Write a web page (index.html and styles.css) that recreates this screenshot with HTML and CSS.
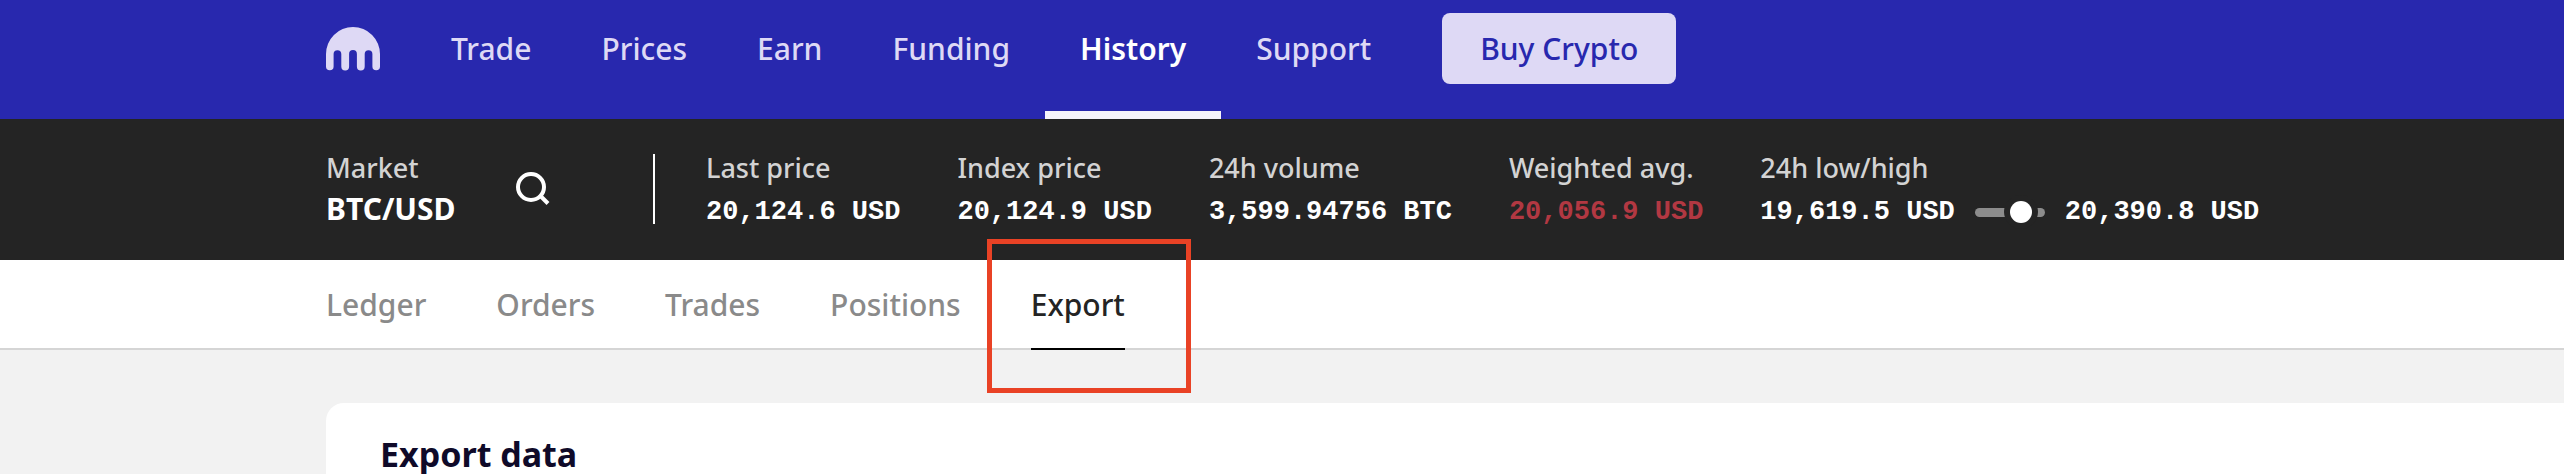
FILE: index.html
```html
<!DOCTYPE html>
<html lang="en">
<head>
    <meta charset="UTF-8">
    <meta name="viewport" content="width=device-width, initial-scale=1.0">
    <title>History - Export</title>
    <link rel="stylesheet" href="styles.css">
</head>
<body>
    <header class="header">
        <a href="#" class="logo" aria-label="Home">
            <svg width="54" height="44" viewBox="0 0 54 44" fill="currentColor">
                <path d="M0 27a27 27 0 0 1 54 0v12.500a3.800 3.800 0 0 1-7.600 0V27a3.800 3.800 0 0 0-7.700 0v12.500a3.900 3.900 0 0 1-7.800 0V27a3.900 3.900 0 0 0-7.800 0v12.500a3.900 3.900 0 0 1-7.800 0V27a3.800 3.800 0 0 0-7.700 0v12.500a3.800 3.800 0 0 1-7.600 0z"/>
            </svg>
        </a>
        <nav class="nav">
            <a href="#">Trade</a>
            <a href="#">Prices</a>
            <a href="#">Earn</a>
            <a href="#">Funding</a>
            <a href="#" class="active">History</a>
            <a href="#">Support</a>
        </nav>
        <button type="button" class="buy-btn">Buy Crypto</button>
    </header>

    <section class="ticker">
        <div class="market">
            <div>
                <div class="label">Market</div>
                <div class="pair">BTC/USD</div>
            </div>
            <button type="button" class="search-btn" aria-label="Search markets">
                <svg width="34" height="34" viewBox="0 0 34 34" fill="none" stroke="currentColor" stroke-width="4">
                    <circle cx="15" cy="15" r="13"/>
                    <path d="M24 23.500l8 8"/>
                </svg>
            </button>
        </div>
        <div class="stats">
            <div>
                <div class="label">Last price</div>
                <div class="value">20,124.6 USD</div>
            </div>
            <div>
                <div class="label">Index price</div>
                <div class="value">20,124.9 USD</div>
            </div>
            <div>
                <div class="label">24h volume</div>
                <div class="value">3,599.94756 BTC</div>
            </div>
            <div>
                <div class="label">Weighted avg.</div>
                <div class="value down">20,056.9 USD</div>
            </div>
            <div>
                <div class="label">24h low/high</div>
                <div class="value range">
                    <span>19,619.5 USD</span>
                    <input type="range" min="0" max="100" value="73" aria-label="Price within 24h range">
                    <span>20,390.8 USD</span>
                </div>
            </div>
        </div>
    </section>

    <nav class="tabs">
        <a href="#">Ledger</a>
        <a href="#">Orders</a>
        <a href="#">Trades</a>
        <a href="#">Positions</a>
        <a href="#" class="active">Export</a>
    </nav>

    <main class="content">
        <div class="card">
            <h1>Export data</h1>
        </div>
    </main>
</body>
</html>
```
FILE: styles.css
```css
:root {
    --gutter: 326px;
    --blue: #2828ae;
    --lavender: #ded9f5;
    --dark: #242424;
}

* {
    box-sizing: border-box;
}

body {
    margin: 0;
    background: #f2f2f2;
    font-family: "Noto Sans", sans-serif;
    font-size: 30px;
    font-weight: 500;
    line-height: 40px;
    white-space: nowrap;
    overflow-x: hidden;
}

a {
    color: inherit;
    text-decoration: none;
}

button {
    border: none;
    font: inherit;
    cursor: pointer;
}

/* Header */
.header {
    display: flex;
    align-items: flex-start;
    padding-left: var(--gutter);
    background: var(--blue);
    color: var(--lavender);
}

.logo {
    display: flex;
    margin-right: 36px;
    padding-top: 27px;
}

.nav {
    display: flex;
}

.nav a {
    padding: 29px 35px 42px;
    border-bottom: 8px solid transparent;
}

.nav a.active {
    border-bottom-color: #f6f5fc;
    color: #fff;
    font-weight: 600;
}

.buy-btn {
    height: 71px;
    margin: 13px 0 0 36px;
    padding: 0 38px;
    border-radius: 8px;
    background: var(--lavender);
    color: var(--blue);
}

/* Market ticker */
.ticker {
    display: flex;
    align-items: flex-start;
    padding: 29px 0 24px var(--gutter);
    background: var(--dark);
    color: #fff;
}

.market {
    display: flex;
    align-items: center;
    justify-content: space-between;
    width: 224px;
}

.search-btn {
    display: flex;
    padding: 0;
    background: none;
    color: #fff;
}

.stats {
    display: flex;
    gap: 57px;
    margin-left: 103px;
    padding-left: 53px;
    background: linear-gradient(#fff, #fff) left 6px / 2px 70px no-repeat;
}

.label {
    color: #d3d3d3;
    font-size: 27px;
}

.pair {
    font-weight: 700;
    line-height: 42px;
}

.value {
    font-family: "Liberation Mono", monospace;
    font-size: 27px;
    font-weight: 700;
    line-height: 48px;
}

.down {
    color: #b23842;
}

.range {
    display: flex;
    align-items: center;
    gap: 20px;
}

.range input {
    appearance: none;
    width: 70px;
    height: 9px;
    margin: 0;
    border-radius: 5px;
    background: #8c8c8c;
}

.range input::-webkit-slider-thumb {
    appearance: none;
    width: 22px;
    height: 22px;
    border-radius: 50%;
    background: #fff;
    box-shadow: 0 0 0 6px var(--dark);
}

/* History tabs */
.tabs {
    display: flex;
    gap: 70px;
    padding-left: var(--gutter);
    border-bottom: 2px solid #d5d5d5;
    background: #fff;
    color: #8a8a8a;
}

.tabs a {
    margin-bottom: -2px;
    padding: 25px 0 23px;
    border-bottom: 2px solid transparent;
}

.tabs a.active {
    position: relative;
    border-bottom-color: #000;
    color: var(--dark);
}

/* highlight box around the current tab */
.tabs a.active::after {
    content: "";
    position: absolute;
    top: -21px;
    right: -66px;
    bottom: -45px;
    left: -44px;
    border: 5px solid #e94225;
}

.content {
    padding: 53px 0 0 var(--gutter);
}

.card {
    padding: 31px 54px 0;
    border-radius: 18px 0 0 0;
    background: #fff;
}

h1 {
    margin: 0;
    color: #0f0a29;
    font-size: 34px;
    line-height: 40px;
}
```
